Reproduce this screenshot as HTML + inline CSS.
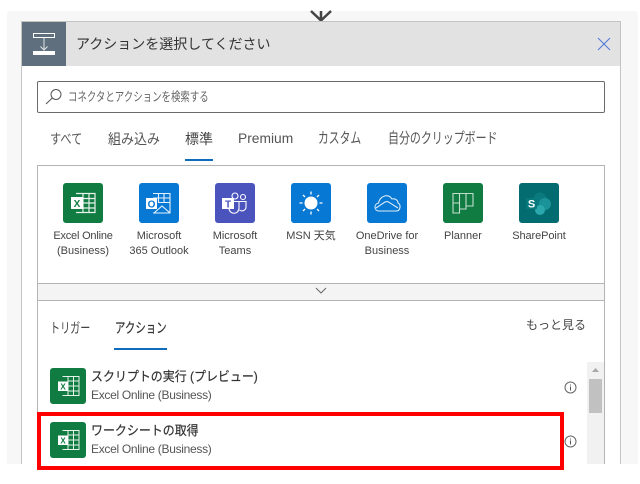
<!DOCTYPE html>
<html lang="ja"><head><meta charset="utf-8">
<style>
html,body{margin:0;padding:0;background:#fff}
body{width:640px;height:484px;position:relative;overflow:hidden;font-family:"Liberation Sans","Noto Sans CJK JP",sans-serif;color:#333}
.a{position:absolute;white-space:nowrap}
.ic{position:absolute;width:40px;height:40px;border-radius:3px}
.ic svg,.li svg{display:block}
.lb{position:absolute;width:76px;text-align:center;font-size:11px;line-height:15px;color:#444;top:229px}
.tab{position:absolute;font-size:14px;line-height:20px;top:129px;color:#555;white-space:nowrap;transform-origin:0 50%}
.li{position:absolute;left:50px;width:36px;height:36px;border-radius:3px;background:#107c41}
.t1{position:absolute;left:91px;font-size:13px;line-height:18px;color:#333;white-space:nowrap;-webkit-text-stroke:.2px #333;transform:scaleX(.92);transform-origin:0 50%}
.t2{position:absolute;left:91px;font-size:12px;line-height:16px;color:#555;white-space:nowrap;letter-spacing:-.3px}
</style></head><body>
<div class="a" style="left:7px;top:11px;width:631px;height:453px;background:#f7f7f7;border-radius:4px 4px 0 0"></div>
<svg class="a" style="left:308px;top:8px" width="26" height="14"><path d="M3 3L13 12.500L23 3M13 3V12" fill="none" stroke="#444" stroke-width="2.500"/></svg>
<div class="a" style="left:21px;top:21px;width:600px;height:443px;background:#fff;border:solid #c4c4c4;border-width:1px 1px 0;box-sizing:border-box"></div>
<div class="a" style="left:22px;top:22px;width:598px;height:44px;background:#e2e2e2"></div>
<div class="a" style="left:22px;top:22px;width:44px;height:44px;background:#5f6f7d"></div>
<svg class="a" style="left:22px;top:22px" width="44" height="44"><rect x="11.500" y="11.500" width="21" height="4" fill="none" stroke="#fff"/><rect x="11" y="29" width="22" height="4" fill="#fff"/><path d="M22 16V28M18.500 24.500L22 28L25.500 24.500" fill="none" stroke="#dfe3e6" stroke-width="1"/></svg>
<div class="a" style="left:76px;top:33px;font-size:14px;line-height:22px;color:#333">アクションを選択してください</div>
<svg class="a" style="left:597px;top:37px" width="14" height="14"><path d="M1 1L13 13M13 1L1 13" stroke="#4a7ad8" stroke-width="1" fill="none"/></svg>

<div class="a" style="left:37px;top:81px;width:568px;height:32px;box-sizing:border-box;border:1px solid #6a6a6a;border-radius:2px;background:#fff"></div>
<svg class="a" style="left:45px;top:88px" width="18" height="17"><circle cx="11" cy="6.500" r="5" fill="none" stroke="#555" stroke-width="1"/><path d="M7.300 10L1 16" stroke="#555" stroke-width="1" fill="none"/></svg>
<div class="a" style="left:68px;top:89px;font-size:12.500px;line-height:17px;color:#666;transform:scaleX(.755);transform-origin:0 50%">コネクタとアクションを検索する</div>

<div class="tab" style="left:50px;transform:scaleX(.8)">すべて</div>
<div class="tab" style="left:108px;transform:scaleX(.93)">組み込み</div>
<div class="tab" style="left:185px;color:#444">標準</div>
<div class="a" style="left:185px;top:159px;width:28px;height:2px;background:#0f6cbd"></div>
<div class="tab" style="left:238px;font-size:13.800px;color:#555">Premium</div>
<div class="tab" style="left:318px;font-size:15px;transform:scaleX(.72)">カスタム</div>
<div class="tab" style="left:388px;font-size:15px;transform:scaleX(.73)">自分のクリップボード</div>

<div class="a" style="left:37px;top:165px;width:568px;height:299px;box-sizing:border-box;border:solid #b4b4b4;border-width:1px 1px 0;background:#fff"></div>

<div class="ic" style="left:63px;top:183px;background:#107c41"><svg width="40" height="40"><path d="M13 10.500H32V29.500H13M20 10.500V29.500M26 10.500V29.500M20 15.500H32M20 20H32M20 25H32" fill="none" stroke="#fff" stroke-width="1.200" opacity=".9"/><rect x="8" y="14" width="12" height="12" fill="#fff"/><text x="14" y="24" font-size="10" font-weight="bold" text-anchor="middle" fill="#107c41" font-family="Liberation Sans">X</text></svg></div>
<div class="ic" style="left:139px;top:183px;background:#0778d4"><svg width="40" height="40"><path d="M14 10.500H31V30H14M19.500 10.500V20M25 10.500V20M14 15H31M19.500 19.500H31M15 30L23 23L31 30" fill="none" stroke="#fff" stroke-width="1.100" opacity=".9"/><rect x="7" y="15" width="11" height="11" fill="#fff"/><text x="12.500" y="24.300" font-size="10" font-weight="bold" text-anchor="middle" fill="#0778d4" font-family="Liberation Sans">O</text></svg></div>
<div class="ic" style="left:215px;top:183px;background:#4b53bc"><svg width="40" height="40"><circle cx="20" cy="13" r="3" fill="none" stroke="#fff" stroke-width="1.100"/><circle cx="28" cy="14" r="2.500" fill="none" stroke="#fff" stroke-width="1.100"/><path d="M18 18.500H24V25A5 5 0 0 1 14 25.500V24M24 18.500H31V24A4 4 0 0 1 24.500 27" fill="none" stroke="#fff" stroke-width="1.100"/><rect x="7" y="15" width="12" height="11" fill="#fff"/><text x="13" y="24.500" font-size="10" font-weight="bold" text-anchor="middle" fill="#4b53bc" font-family="Liberation Sans">T</text></svg></div>
<div class="ic" style="left:291px;top:183px;background:#0778d4"><svg width="40" height="40"><circle cx="20" cy="20" r="6.500" fill="#fff"/><path d="M20 8.500V11.500M20 28.500V31.500M8.500 20H11.500M28.500 20H31.500M12 12L14 14M26 26L28 28M28 12L26 14M14 26L12 28" stroke="#fff" stroke-width="1.300" fill="none"/></svg></div>
<div class="ic" style="left:367px;top:183px;background:#0778d4"><svg width="40" height="40"><path d="M12 28C7 28 6.500 21 11.500 20C13 13 21 10 25 16C29 15 31 18 31 20C34 21 34 28 29 28ZM9 25L18 19C20 18 22 19 23 20L31 25" fill="none" stroke="#fff" stroke-width="1.100" opacity=".85"/></svg></div>
<div class="ic" style="left:443px;top:183px;background:#107c41"><svg width="40" height="40"><path d="M10 10.500H16.500V30H10ZM16.500 10.500H23V26H16.500ZM23 10.500H30V23H23ZM10 20H16.500" fill="none" stroke="#fff" stroke-width="1.100" opacity=".75"/></svg></div>
<div class="ic" style="left:519px;top:183px;background:#036c70"><svg width="40" height="40"><circle cx="21" cy="16" r="6.500" fill="#0a7a7e"/><circle cx="26" cy="21" r="6" fill="#1a9398"/><circle cx="21" cy="27" r="5" fill="#2aa8ac"/><rect x="7" y="15" width="11" height="11" rx="1" fill="#07797d"/><text x="12.500" y="24.500" font-size="11" font-weight="bold" text-anchor="middle" fill="#fff" font-family="Liberation Sans">S</text></svg></div>

<div class="lb" style="left:45px"><span style="letter-spacing:-.2px">Excel Online</span><br>(Business)</div>
<div class="lb" style="left:121px">Microsoft<br>365 Outlook</div>
<div class="lb" style="left:197px">Microsoft<br>Teams</div>
<div class="lb" style="left:273px">MSN 天気</div>
<div class="lb" style="left:349px">OneDrive for<br>Business</div>
<div class="lb" style="left:425px">Planner</div>
<div class="lb" style="left:501px"><span style="letter-spacing:-.1px">SharePoint</span></div>

<div class="a" style="left:38px;top:283px;width:566px;height:18px;background:#f4f4f4;border-top:1px solid #b4b4b4;border-bottom:1px solid #b4b4b4;box-sizing:border-box"></div>
<svg class="a" style="left:315px;top:287px" width="12" height="8"><path d="M1 1L6 6L11 1" fill="none" stroke="#666" stroke-width="1"/></svg>

<div class="a" style="left:50px;top:318px;font-size:14px;line-height:20px;color:#444;transform:scaleX(.72);transform-origin:0 50%">トリガー</div>
<div class="a" style="left:115px;top:318px;font-size:14px;line-height:20px;color:#333;transform:scaleX(.745);transform-origin:0 50%;-webkit-text-stroke:.2px #333">アクション</div>
<div class="a" style="left:114px;top:348px;width:53px;height:2px;background:#0f6cbd"></div>
<div class="a" style="left:526px;top:316px;font-size:12px;line-height:19px;color:#444">もっと見る</div>

<div class="li" style="top:368px"><svg width="36" height="36"><path d="M12.500 8.500H29V27.500H12.500M18 8.500V27.500M23.500 8.500V27.500M18 13H29M18 18H29M18 23H29" fill="none" stroke="#fff" stroke-width="1" opacity=".9"/><rect x="8" y="13.500" width="10" height="9.500" fill="#fff"/><text x="13" y="21.500" font-size="8" font-weight="bold" text-anchor="middle" fill="#107c41" font-family="Liberation Sans">X</text></svg></div>
<div class="t1" style="top:368px">スクリプトの実行 (プレビュー)</div>
<div class="t2" style="top:387px">Excel Online (Business)</div>
<div class="li" style="top:422px"><svg width="36" height="36"><path d="M12.500 8.500H29V27.500H12.500M18 8.500V27.500M23.500 8.500V27.500M18 13H29M18 18H29M18 23H29" fill="none" stroke="#fff" stroke-width="1" opacity=".9"/><rect x="8" y="13.500" width="10" height="9.500" fill="#fff"/><text x="13" y="21.500" font-size="8" font-weight="bold" text-anchor="middle" fill="#107c41" font-family="Liberation Sans">X</text></svg></div>
<div class="t1" style="top:422px">ワークシートの取得</div>
<div class="t2" style="top:441px">Excel Online (Business)</div>

<svg class="a" style="left:564px;top:381px" width="13" height="13"><circle cx="6.500" cy="6.500" r="5.500" fill="none" stroke="#666"/><path d="M6.500 5.500V9.500M6.500 3.500V4.500" stroke="#555" fill="none"/></svg>
<svg class="a" style="left:564px;top:435px" width="13" height="13"><circle cx="6.500" cy="6.500" r="5.500" fill="none" stroke="#666"/><path d="M6.500 5.500V9.500M6.500 3.500V4.500" stroke="#555" fill="none"/></svg>

<div class="a" style="left:587px;top:362px;width:17px;height:102px;background:#f1f1f1"></div>
<div class="a" style="left:589px;top:379px;width:13px;height:34px;background:#c1c1c1"></div>
<svg class="a" style="left:591px;top:367px" width="9" height="6"><path d="M1 5L4.500 1L8 5Z" fill="#a8a8a8"/></svg>

<div class="a" style="left:37px;top:412px;width:527px;height:58px;box-sizing:border-box;border:4px solid #f00"></div>
</body></html>
